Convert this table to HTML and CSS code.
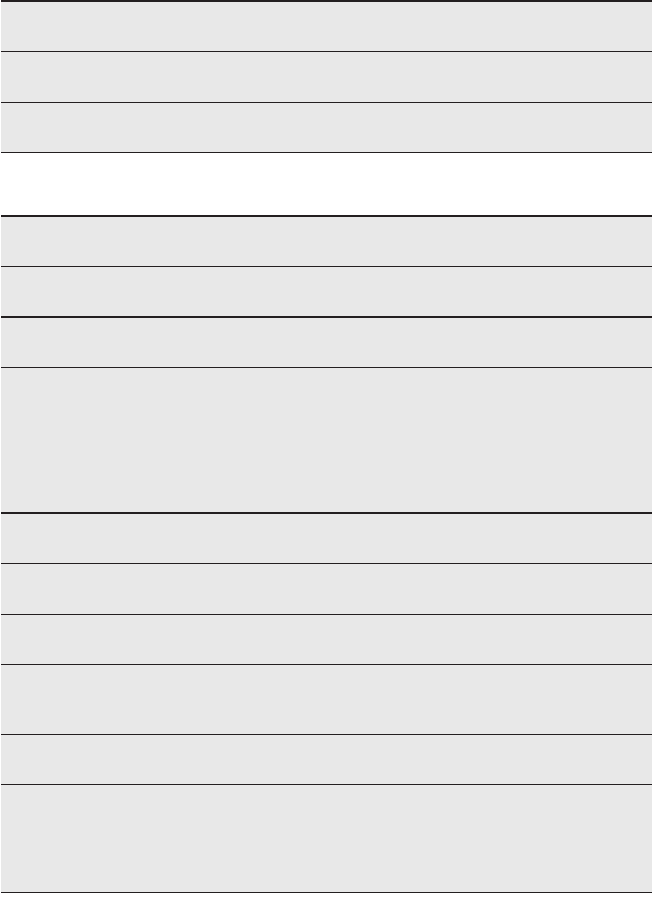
FILE: index.html
```html
<!DOCTYPE html>
<html>
<head>
<meta charset="utf-8">
<link rel="stylesheet" href="styles.css">
</head>
<body>
<div class="page">
  <div class="group group-first">
    <div class="row h49"></div>
    <div class="row h50"></div>
    <div class="row h49"></div>
  </div>
  <div class="spacer"></div>
  <div class="group">
    <div class="row h49"></div>
    <div class="row h49 thick"></div>
    <div class="row h49"></div>
    <div class="row h144 thick"></div>
    <div class="row h49"></div>
    <div class="row h50"></div>
    <div class="row h49"></div>
    <div class="row h69"></div>
    <div class="row h49"></div>
    <div class="row h107"></div>
  </div>
</div>
</body>
</html>
```
FILE: styles.css
```css
html, body {
  margin: 0;
  padding: 0;
  background: #ffffff;
  font-family: "Liberation Sans", Arial, sans-serif;
}
.page {
  width: 651px;
  margin-left: 1px;
  display: flex;
  flex-direction: column;
}
.group {
  display: flex;
  flex-direction: column;
  border-top: 2px solid #231f20;
}
.row {
  background: #e8e8e8;
  border-bottom: 1px solid #231f20;
}
.row.thick {
  border-bottom-width: 2px;
}
.spacer {
  height: 62px;
}
.h49 { height: 49px; }
.h50 { height: 50px; }
.h69 { height: 69px; }
.h107 { height: 107px; }
.h144 { height: 144px; }
```
